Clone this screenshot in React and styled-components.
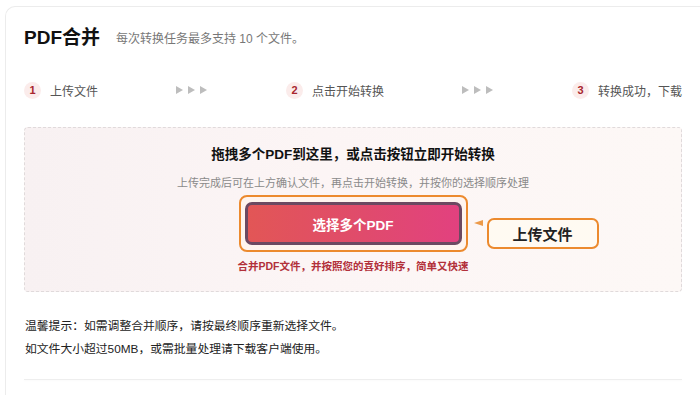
import React from 'react'
import styled, { createGlobalStyle } from 'styled-components'

const GlobalStyle = createGlobalStyle`
  html, body {
    margin: 0;
    padding: 0;
    background: #fff;
  }
  body {
    font-family: "Liberation Sans", "Noto Sans CJK SC", sans-serif;
    color: #222;
  }
`

const Card = styled.div`
  margin: 6px 0 0 5px;
  padding: 18px 18px 20px 18px;
  border-top: 1px solid #ececec;
  border-left: 1px solid #ececec;
  border-top-left-radius: 10px;
  min-height: 360px;
  box-sizing: border-box;
`

const Header = styled.div`
  display: flex;
  align-items: center;
  gap: 16px;
  height: 26px;
`

const Title = styled.h1`
  margin: 0;
  font-size: 19px;
  font-weight: 700;
  color: #111;
  line-height: 26px;
`

const Subtitle = styled.span`
  font-size: 12px;
  color: #777;
  line-height: 26px;
  padding-top: 2px;
`

const Steps = styled.div`
  display: flex;
  justify-content: space-between;
  align-items: center;
  margin-top: 31px;
  height: 16px;
`

const Step = styled.div`
  display: flex;
  align-items: center;
  gap: 9px;
`

const StepNum = styled.span`
  width: 17px;
  height: 17px;
  border-radius: 50%;
  background: #fbeceb;
  color: #a8262e;
  font-size: 11px;
  font-weight: 700;
  display: flex;
  align-items: center;
  justify-content: center;
`

const StepLabel = styled.span`
  font-size: 12px;
  color: #555;
`

const Arrows = styled.div`
  display: flex;
  gap: 5px;
  width: 32px;
`

const DropZone = styled.div`
  margin-top: 29px;
  border: 1px dashed #e0dadb;
  border-radius: 4px;
  background: linear-gradient(90deg, #f8f1f2 0%, #fcf5f5 45%, #fdf8f6 100%);
  padding: 17px 0 18px;
  display: flex;
  flex-direction: column;
  align-items: center;
`

const DropTitle = styled.div`
  font-size: 13.5px;
  font-weight: 700;
  color: #111;
  line-height: 20px;
`

const DropHint = styled.div`
  margin-top: 10px;
  font-size: 11px;
  color: #8a8a8a;
  line-height: 16px;
`

const ButtonFrame = styled.div`
  position: relative;
  margin-top: 4px;
  padding: 5px 4px;
  border: 2px solid #ec8a2e;
  border-radius: 8px;
  background: #fff4ee;
`

const PickButton = styled.button`
  display: flex;
  align-items: center;
  justify-content: center;
  width: 217px;
  height: 43px;
  box-sizing: border-box;
  border: 3px solid #6c4961;
  border-radius: 7px;
  background: linear-gradient(90deg, #e25656 0%, #e04b6c 55%, #e2417f 100%);
  color: #fff;
  font-family: inherit;
  font-size: 13.5px;
  font-weight: 700;
  cursor: pointer;
`

const CalloutArrow = styled.span`
  position: absolute;
  left: calc(100% + 8px);
  top: 50%;
  margin-top: -4px;
  width: 0;
  height: 0;
  border-top: 3px solid transparent;
  border-bottom: 3px solid transparent;
  border-right: 9px solid #ec9a4a;
`

const Callout = styled.div`
  position: absolute;
  left: calc(100% + 21px);
  top: 21px;
  width: 112px;
  height: 31px;
  box-sizing: border-box;
  border: 2px solid #ec8a2e;
  border-radius: 7px;
  background: #fffaf2;
  display: flex;
  align-items: center;
  justify-content: center;
  font-size: 15px;
  font-weight: 700;
  color: #222;
`

const Caption = styled.div`
  margin-top: 7px;
  font-size: 10.5px;
  font-weight: 600;
  color: #b2303a;
  line-height: 14px;
`

const Tips = styled.div`
  margin-top: 23px;
  padding-left: 1px;
`

const TipLine = styled.p`
  margin: 0;
  font-size: 11.8px;
  line-height: 23px;
  color: #222;
`

const Divider = styled.div`
  margin-top: 18px;
  height: 1px;
  background: #eeeeee;
  box-shadow: 0 1px 2px rgba(0, 0, 0, 0.03);
`

const Triangle = () => (
  <svg width="7" height="8" viewBox="0 0 7 8">
    <polygon points="0,0 7,4 0,8" fill="#bdbdbd" />
  </svg>
)

const StepArrows = () => (
  <Arrows>
    <Triangle />
    <Triangle />
    <Triangle />
  </Arrows>
)

const steps = ['上传文件', '点击开始转换', '转换成功，下载']

export default function App() {
  return (
    <>
      <GlobalStyle />
      <Card>
        <Header>
          <Title>PDF合并</Title>
          <Subtitle>每次转换任务最多支持 10 个文件。</Subtitle>
        </Header>

        <Steps>
          {steps.map((label, i) => (
            <React.Fragment key={label}>
              {i > 0 && <StepArrows />}
              <Step>
                <StepNum>{i + 1}</StepNum>
                <StepLabel>{label}</StepLabel>
              </Step>
            </React.Fragment>
          ))}
        </Steps>

        <DropZone>
          <DropTitle>拖拽多个PDF到这里，或点击按钮立即开始转换</DropTitle>
          <DropHint>上传完成后可在上方确认文件，再点击开始转换，并按你的选择顺序处理</DropHint>
          <ButtonFrame>
            <PickButton>选择多个PDF</PickButton>
            <CalloutArrow />
            <Callout>上传文件</Callout>
          </ButtonFrame>
          <Caption>合并PDF文件，并按照您的喜好排序，简单又快速</Caption>
        </DropZone>

        <Tips>
          <TipLine>温馨提示：如需调整合并顺序，请按最终顺序重新选择文件。</TipLine>
          <TipLine>如文件大小超过50MB，或需批量处理请下载客户端使用。</TipLine>
        </Tips>

        <Divider />
      </Card>
    </>
  )
}
